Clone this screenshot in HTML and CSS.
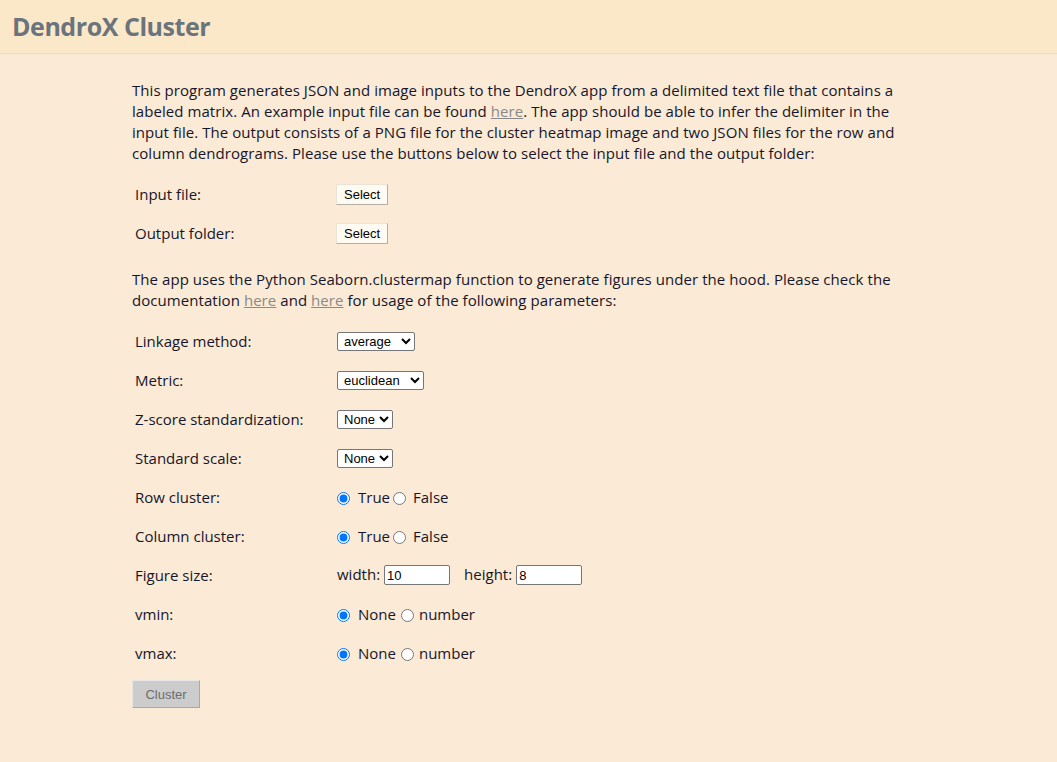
FILE: index.html
```html
<!DOCTYPE html>
<html>
<head>
<meta charset="utf-8">
<title>DendroX Cluster</title>
<link rel="stylesheet" href="styles.css">
</head>
<body>
<header class="topbar">
  <h1 class="title">DendroX Cluster</h1>
</header>
<main class="content">
  <p class="intro">This program generates JSON and image inputs to the DendroX app from a delimited text file that contains a labeled matrix. An example input file can be found <a href="#">here</a>. The app should be able to infer the delimiter in the input file. The output consists of a PNG file for the cluster heatmap image and two JSON files for the row and column dendrograms. Please use the buttons below to select the input file and the output folder:</p>
  <table class="form form-files">
    <tr><td class="lbl">Input file:</td><td><button class="btn">Select</button></td></tr>
    <tr><td class="lbl">Output folder:</td><td><button class="btn">Select</button></td></tr>
  </table>
  <p class="intro">The app uses the Python Seaborn.clustermap function to generate figures under the hood. Please check the documentation <a href="#">here</a> and <a href="#">here</a> for usage of the following parameters:</p>
  <table class="form form-params">
    <tr><td class="lbl">Linkage method:</td><td><select class="sel sel-avg"><option>average</option><option>single</option><option>complete</option><option>weighted</option></select></td></tr>
    <tr><td class="lbl">Metric:</td><td><select class="sel sel-euc"><option>euclidean</option><option>correlation</option></select></td></tr>
    <tr><td class="lbl">Z-score standardization:</td><td><select class="sel sel-none"><option>None</option><option>0</option><option>1</option></select></td></tr>
    <tr><td class="lbl">Standard scale:</td><td><select class="sel sel-none"><option>None</option><option>0</option><option>1</option></select></td></tr>
    <tr><td class="lbl">Row cluster:</td><td class="radios"><input class="r1" type="radio" name="rc" checked><span class="rt">True</span><input class="r2" type="radio" name="rc"><span>False</span></td></tr>
    <tr><td class="lbl">Column cluster:</td><td class="radios"><input class="r1" type="radio" name="cc" checked><span class="rt">True</span><input class="r2" type="radio" name="cc"><span>False</span></td></tr>
    <tr><td class="lbl">Figure size:</td><td class="sizes"><span>width:</span><input class="num" type="text" value="10"><span class="hlabel">height:</span><input class="num" type="text" value="8"></td></tr>
    <tr><td class="lbl">vmin:</td><td class="radios"><input class="r1" type="radio" name="vn" checked><span class="rt">None</span><input class="r3" type="radio" name="vn"><span>number</span></td></tr>
    <tr><td class="lbl">vmax:</td><td class="radios"><input class="r1" type="radio" name="vx" checked><span class="rt">None</span><input class="r3" type="radio" name="vx"><span>number</span></td></tr>
  </table>
  <button class="cluster" disabled>Cluster</button>
</main>
</body>
</html>
```
FILE: styles.css
```css
html, body {
  margin: 0;
  padding: 0;
  background: #fbead6;
}
body {
  font-family: "Open Sans", "Noto Sans", sans-serif;
  font-size: 15px;
  color: #16162a;
  min-height: 762px;
}
.topbar {
  background: #fbe8c8;
  border-bottom: 1px solid #dcdce0;
  height: 53px;
  display: flex;
  align-items: center;
  padding-left: 12px;
}
.title {
  margin: 0;
  font-size: 25px;
  font-weight: 700;
  color: #6b747c;
  letter-spacing: -0.45px;
  position: relative;
  top: -1px;
}
.content {
  width: 793px;
  margin: 0 auto;
  padding-top: 26px;
}
.intro {
  margin: 0 13px 10px 0;
  line-height: 21px;
  letter-spacing: 0.06px;
}
.intro a {
  color: #8a8a8a;
}
.form {
  border-spacing: 0;
}
.form-files {
  margin-bottom: 17px;
}
.form-params {
  margin-bottom: 8px;
}
.form td {
  height: 39px;
  padding: 0 0 0 3px;
  vertical-align: middle;
  white-space: nowrap;
}
.form td.lbl {
  width: 199px;
}
.btn {
  font-family: "Liberation Sans", Arial, sans-serif;
  font-size: 13px;
  background: #fffbf3;
  border: 1px solid;
  border-color: #ebe3d6 #b3aea6 #b3aea6 #ebe3d6;
  border-radius: 0;
  height: 21px;
  padding: 0 7px;
  margin-left: -1px;
  color: #000;
}
.sel {
  font-family: "Liberation Sans", Arial, sans-serif;
  font-size: 13px;
  background: #fff;
  border: 1px solid #767676;
  border-radius: 2px;
  height: 19px;
  padding: 0 0 0 2px;
  color: #000;
}
.sel-avg {
  width: 78px;
}
.sel-euc {
  width: 87px;
}
.sel-none {
  width: 56px;
}
.radios input {
  width: 13px;
  height: 13px;
  vertical-align: -2px;
  accent-color: #0075ff;
}
.radios .r1 {
  margin: 0 8px 0 0;
}
.radios .r2 {
  margin: 0 7px 0 3px;
}
.radios .r3 {
  margin: 0 5px 0 5px;
}
.num {
  width: 60px;
  height: 16px;
  font-family: "Liberation Sans", Arial, sans-serif;
  font-size: 13px;
  border: 1px solid #767676;
  border-radius: 2px;
  padding: 1px 2px;
  margin: 0 0 0 4px;
}
.hlabel {
  margin-left: 14px;
}
.cluster {
  display: block;
  font-family: "Liberation Sans", Arial, sans-serif;
  font-size: 13px;
  color: #6d6d6d;
  background: #cccccc;
  border: 1px solid #aaa;
  border-color: #e6e6e6 #a8a8a8 #a8a8a8 #e6e6e6;
  width: 68px;
  height: 28px;
  margin: 0;
}
```
